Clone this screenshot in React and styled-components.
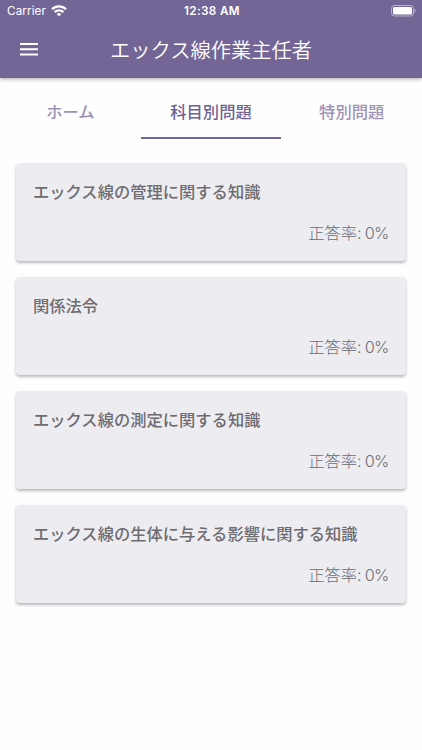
import React, { useState } from 'react'
import styled, { createGlobalStyle } from 'styled-components'

const GlobalStyle = createGlobalStyle`
    * {
        box-sizing: border-box;
    }

    body {
        margin: 0;
        background: #fefefe;
        font-family: Inter, "Noto Sans CJK JP", sans-serif;
    }
`

const Screen = styled.div`
    display: flex;
    flex-direction: column;
    min-height: 100vh;
`

const Header = styled.header`
    height: 78px;
    color: #fff;
    background: #736696;
    box-shadow: 0 1px 4px rgba(0, 0, 0, .35);
`

const StatusBar = styled.div`
    display: grid;
    grid-template-columns: 1fr auto 1fr;
    align-items: center;
    height: 22px;
    padding: 0 5px 0 7px;
    font-size: 11.7px;
    line-height: 22px;
`

const Carrier = styled.div`
    display: flex;
    align-items: center;
    gap: 5px;
    letter-spacing: .1px;
`

const Clock = styled.div`
    font-size: 11.7px;
    font-weight: 600;
    letter-spacing: .35px;
`

const BatteryIcon = styled.svg`
    justify-self: end;
    margin-bottom: 1px;
`

const Toolbar = styled.div`
    display: grid;
    grid-template-columns: 58px 1fr 58px;
    align-items: center;
    height: 55px;
`

const MenuButton = styled.button`
    display: flex;
    justify-content: center;
    border: none;
    padding: 0 0 1px;
    color: inherit;
    background: none;
`

const Title = styled.h1`
    margin: 0;
    padding-top: 2px;
    font-size: 20.3px;
    font-weight: 350;
    line-height: 54px;
    text-align: center;
    white-space: nowrap;
`

const Tabs = styled.nav`
    display: grid;
    grid-template-columns: repeat(3, 1fr);
    height: 61px;
`

const Tab = styled.button`
    border: none;
    border-bottom: 2px solid ${({ $active }) => ($active ? '#736696' : 'transparent')};
    padding: 7px 0 0;
    font-family: inherit;
    font-size: 16.3px;
    font-weight: 500;
    color: ${({ $active }) => ($active ? '#6f6293' : '#9d93b6')};
    background: none;
`

const CardList = styled.main`
    display: flex;
    flex-direction: column;
    gap: 16px;
    padding: 24px 16px;
`

const Card = styled.article`
    display: flex;
    flex-direction: column;
    justify-content: space-between;
    height: 98px;
    padding: 17px 17px 16px;
    border-radius: 4px;
    color: #6d6c71;
    background: #edecf1;
    box-shadow: 0 2px 3px rgba(0, 0, 0, .27);
`

const Subject = styled.h2`
    margin: 0;
    font-size: 16.3px;
    font-weight: 500;
    line-height: 24px;
`

const Rate = styled.p`
    margin: 0;
    font-size: 16.3px;
    font-weight: 300;
    line-height: 24px;
    text-align: right;
`

const Percent = styled.span`
    margin-right: .6px;
    letter-spacing: -.8px;
`

const tabs = ['ホーム', '科目別問題', '特別問題']

const subjects = [
    { name: 'エックス線の管理に関する知識', rate: 0 },
    { name: '関係法令', rate: 0 },
    { name: 'エックス線の測定に関する知識', rate: 0 },
    { name: 'エックス線の生体に与える影響に関する知識', rate: 0 }
]

function Wifi() {
    return (
        <svg width="16" height="12" viewBox="0 0 16 12" fill="none" stroke="#fff" strokeWidth="2.3">
            <path d="M1 4.2a10 10 0 0 1 14 0" />
            <path d="M3.6 7.1a6.3 6.3 0 0 1 8.8 0" />
            <path d="M8 11.5 5.7 9.1a3.3 3.3 0 0 1 4.6 0z" fill="#fff" stroke="none" />
        </svg>
    )
}

function Battery() {
    return (
        <BatteryIcon width="26" height="12" viewBox="0 0 26 12">
            <rect x=".5" y=".5" width="22" height="10.5" rx="3" fill="none" stroke="#fff" strokeOpacity=".5" />
            <rect x="2" y="2" width="19" height="7.5" rx="1.6" fill="#fff" />
            <path d="M23.6 4v3.7a2 2 0 0 0 0-3.7" fill="#fff" fillOpacity=".5" />
        </BatteryIcon>
    )
}

export default function App() {
    const [activeTab, setActiveTab] = useState(1)

    return (
        <Screen>
            <GlobalStyle />
            <Header>
                <StatusBar>
                    <Carrier>
                        Carrier
                        <Wifi />
                    </Carrier>
                    <Clock>12:38 AM</Clock>
                    <Battery />
                </StatusBar>
                <Toolbar>
                    <MenuButton aria-label="メニュー">
                        <svg width="18" height="13" viewBox="0 0 18 13" fill="#fff">
                            <path d="M0 0h18v2.1H0zM0 5.2h18v2.1H0zM0 10.4h18v2.1H0z" />
                        </svg>
                    </MenuButton>
                    <Title>エックス線作業主任者</Title>
                </Toolbar>
            </Header>
            <Tabs>
                {tabs.map((label, index) => (
                    <Tab
                        key={label}
                        $active={index === activeTab}
                        onClick={() => setActiveTab(index)}
                    >
                        {label}
                    </Tab>
                ))}
            </Tabs>
            <CardList>
                {subjects.map(({ name, rate }) => (
                    <Card key={name}>
                        <Subject>{name}</Subject>
                        <Rate>正答率<Percent>: {rate}%</Percent></Rate>
                    </Card>
                ))}
            </CardList>
        </Screen>
    )
}
